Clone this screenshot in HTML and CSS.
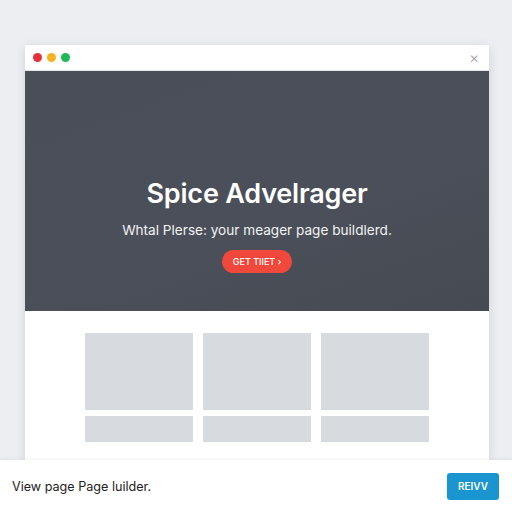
FILE: index.html
```html
<!DOCTYPE html>
<html lang="en">
<head>
  <meta charset="UTF-8" />
  <meta name="viewport" content="width=device-width, initial-scale=1.0"/>
  <title>Page Builder</title>
  <link rel="stylesheet" href="styles.css">
</head>
<body>

  <div class="stage">
    <div class="window">
      <div class="titlebar">
        <div class="dots">
          <span class="dot red"></span>
          <span class="dot yellow"></span>
          <span class="dot green"></span>
        </div>
        <span class="close">&times;</span>
      </div>

      <div class="hero">
        <h1>Spice Advelrager</h1>
        <p>Whtal Plerse: your meager page buildlerd.</p>
        <button class="cta">GET TIIET &rsaquo;</button>
      </div>

      <div class="content">
        <div class="grid">
          <div class="card tall"></div>
          <div class="card tall"></div>
          <div class="card tall"></div>
          <div class="card short"></div>
          <div class="card short"></div>
          <div class="card short"></div>
        </div>
      </div>
    </div>
  </div>

  <div class="bottombar">
    <span class="bottom-text">View page Page luilder.</span>
    <button class="review">REIVV</button>
  </div>

</body>
</html>
```

FILE: styles.css
```css
body {
  margin: 0;
  font-family: Inter, "Liberation Sans", sans-serif;
  background: #eceef1;
  width: 512px;
  height: 512px;
  overflow: hidden;
  display: flex;
  flex-direction: column;
}

.stage {
  flex: 1;
  padding: 45px 23px 0 25px;
  overflow: hidden;
}

.window {
  background: #fff;
  box-shadow: 0 2px 10px rgba(0, 0, 0, 0.12);
  height: 100%;
  display: flex;
  flex-direction: column;
}

.titlebar {
  height: 25px;
  display: flex;
  align-items: center;
  justify-content: space-between;
  padding: 0 10px 0 8px;
  border-bottom: 1px solid #e3e5e8;
}

.dots {
  display: flex;
  gap: 5px;
}

.dot {
  width: 9px;
  height: 9px;
  border-radius: 50%;
}

.red { background: #e5323a; }
.yellow { background: #f6b21f; }
.green { background: #1db954; }

.close {
  color: #9a9da3;
  font-size: 15px;
  line-height: 1;
  font-weight: 300;
}

.hero {
  height: 240px;
  background: linear-gradient(160deg, #4a4e58, #4b4f59 60%, #464a52);
  color: #fff;
  display: flex;
  flex-direction: column;
  align-items: center;
  padding-top: 106px;
  box-sizing: border-box;
}

.hero h1 {
  margin: 0;
  font-size: 27px;
  font-weight: 600;
  letter-spacing: -0.2px;
}

.hero p {
  margin: 12px 0 0;
  font-size: 13.6px;
  color: #f2f3f5;
}

.cta {
  margin-top: 12px;
  background: #f0483a;
  color: #fff;
  border: none;
  border-radius: 12px;
  height: 23px;
  padding: 0 11px;
  font-family: inherit;
  font-size: 9px;
  font-weight: 500;
}

.content {
  flex: 1;
  padding: 22px 60px 0;
}

.grid {
  display: grid;
  grid-template-columns: 108px 108px 108px;
  grid-template-rows: 77px 26px;
  column-gap: 10px;
  row-gap: 6px;
}

.card {
  background: #d7dbdf;
}

.bottombar {
  height: 52px;
  background: #fff;
  display: flex;
  align-items: center;
  justify-content: space-between;
  padding: 0 13px 0 12px;
  box-shadow: 0 -1px 4px rgba(0, 0, 0, 0.06);
  position: relative;
}

.bottom-text {
  font-size: 12.6px;
  color: #222;
}

.review {
  background: #1a95d0;
  color: #fff;
  border: none;
  border-radius: 3px;
  width: 52px;
  height: 27px;
  font-family: inherit;
  font-size: 10px;
  font-weight: 600;
}
```
